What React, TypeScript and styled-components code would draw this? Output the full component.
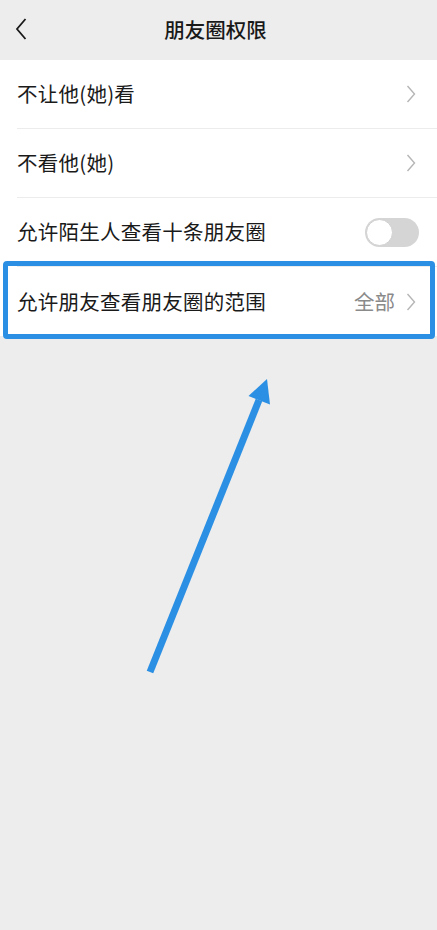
import React from 'react';
import styled, { createGlobalStyle } from 'styled-components';

const GlobalStyle = createGlobalStyle`
  html, body {
    margin: 0;
    padding: 0;
    background: #ededed;
  }
  body {
    font-family: "Noto Sans CJK SC", "Noto Sans", sans-serif;
    -webkit-font-smoothing: antialiased;
  }
`;

type Item = {
  label: string;
  kind: 'link' | 'toggle';
  value?: string;
  highlighted?: boolean;
};

const items: Item[] = [
  { label: '不让他(她)看', kind: 'link' },
  { label: '不看他(她)', kind: 'link' },
  { label: '允许陌生人查看十条朋友圈', kind: 'toggle' },
  { label: '允许朋友查看朋友圈的范围', kind: 'link', value: '全部', highlighted: true },
];

const BackIcon = () => (
  <svg width="14" height="26" viewBox="0 0 14 26">
    <path d="M11.5 3 L3 13 L11.5 23" fill="none" stroke="#1a1a1a" strokeWidth="1.8" />
  </svg>
);

const Chevron = () => (
  <svg width="10" height="20" viewBox="0 0 10 20">
    <path d="M1.5 2 L8.5 10 L1.5 18" fill="none" stroke="#b5b5b5" strokeWidth="1.4" />
  </svg>
);

const App = () => {
  return (
    <Page>
      <GlobalStyle />
      <Header>
        <BackButton>
          <BackIcon />
        </BackButton>
        <Title>朋友圈权限</Title>
        <span />
      </Header>
      <List>
        {items.map((item, i) => (
          <Row key={item.label}>
            <RowInner last={i === items.length - 1}>
              <Label>{item.label}</Label>
              {item.kind === 'toggle' ? (
                <Switch>
                  <Knob />
                </Switch>
              ) : (
                <Trail>
                  {item.value && <Value>{item.value}</Value>}
                  <Chevron />
                </Trail>
              )}
            </RowInner>
            {item.highlighted && <HighlightBox />}
          </Row>
        ))}
      </List>
      <Annotation viewBox="0 0 437 930">
        <line x1="150" y1="672" x2="259" y2="400" stroke="#2b8fe3" strokeWidth="7" />
        <polygon points="267,379 248.5,396 270,404.5" fill="#2b8fe3" />
      </Annotation>
    </Page>
  );
};

export default App;

const Page = styled.div`
  position: relative;
  width: 437px;
  min-height: 930px;
  background: #ededed;
  overflow: hidden;
`;

const Header = styled.div`
  height: 60px;
  display: grid;
  grid-template-columns: 56px 1fr 62px;
  align-items: center;
  background: #ededed;
`;

const BackButton = styled.div`
  display: flex;
  align-items: center;
  padding-left: 14px;
  padding-bottom: 2px;
`;

const Title = styled.div`
  text-align: center;
  font-size: 20.5px;
  font-weight: 500;
  color: #191919;
  padding-bottom: 3px;
`;

const List = styled.div`
  background: #fff;
`;

const Row = styled.div`
  position: relative;
  background: #fff;
`;

const RowInner = styled.div<{ last: boolean }>`
  height: 69px;
  box-sizing: border-box;
  margin-left: 17px;
  padding-right: 18px;
  display: flex;
  align-items: center;
  justify-content: space-between;
  border-bottom: ${({ last }) => (last ? 'none' : '1px solid #ececec')};
`;

const Label = styled.div`
  font-size: 20.5px;
  letter-spacing: 0.25px;
  color: #1a1a1a;
  padding-bottom: 2px;
`;

const Trail = styled.div`
  display: flex;
  align-items: center;
  gap: 11px;
  padding-right: 3px;
`;

const Value = styled.span`
  font-size: 20.5px;
  color: #8a8a8a;
  padding-bottom: 2px;
`;

const Switch = styled.div`
  width: 54px;
  height: 29px;
  border-radius: 15px;
  background: #d5d5d5;
  display: flex;
  align-items: center;
  padding: 1px;
  box-sizing: border-box;
`;

const Knob = styled.div`
  width: 27px;
  height: 27px;
  border-radius: 50%;
  background: #fff;
  box-sizing: border-box;
  border: 1px solid #d0d0d0;
`;

const HighlightBox = styled.div`
  position: absolute;
  top: -6px;
  left: 3px;
  right: 2px;
  bottom: -3px;
  border: 5px solid #2b8fe3;
  border-radius: 4px;
  pointer-events: none;
`;

const Annotation = styled.svg`
  position: absolute;
  left: 0;
  top: 0;
  width: 437px;
  height: 930px;
  pointer-events: none;
`;
